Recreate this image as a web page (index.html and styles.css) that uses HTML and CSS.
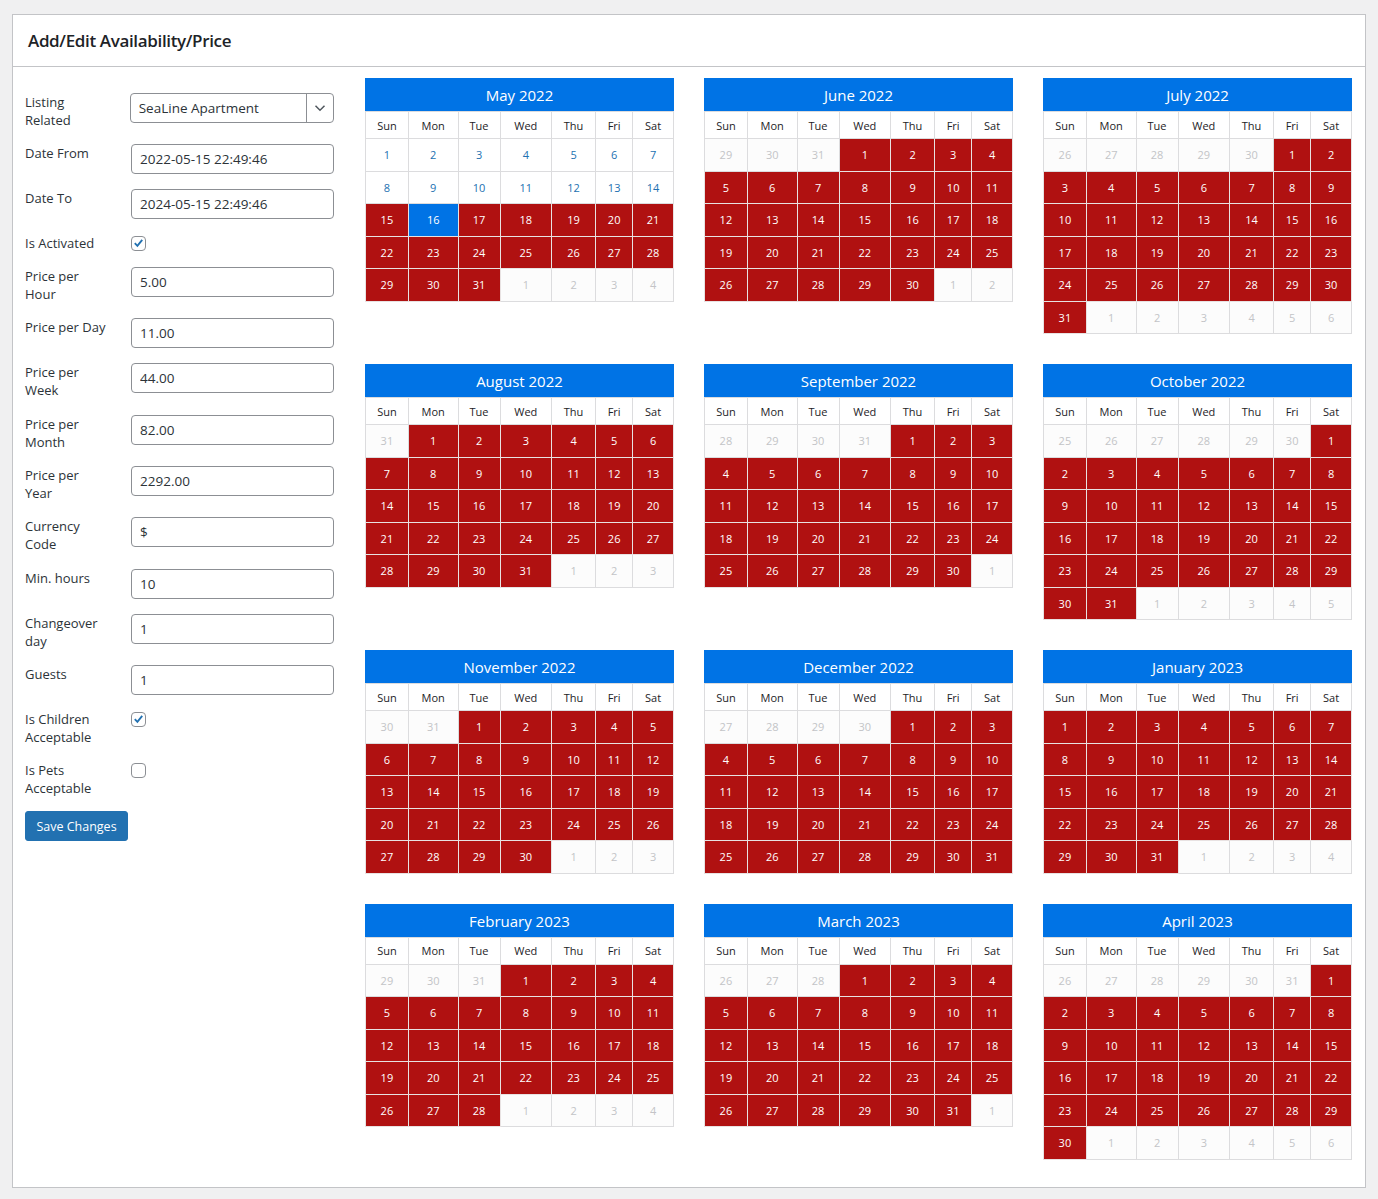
FILE: index.html
```html
<!DOCTYPE html>
<html lang="en">
<head>
<meta charset="utf-8">
<title>Add/Edit Availability/Price</title>
<link rel="stylesheet" href="styles.css">
</head>
<body>
<div class="panel">
  <div class="panel-head"><h2>Add/Edit Availability/Price</h2></div>
  <div class="panel-body">
    <form class="form">
      <div class="row"><label>Listing Related</label>
        <div class="select"><span class="select-text">SeaLine Apartment</span><span class="select-arrow"><svg width="12" height="8" viewBox="0 0 12 8"><path d="M1.5 1.8 6 6.2 10.5 1.8" fill="none" stroke="#50575e" stroke-width="1.5"/></svg></span></div></div>
      <div class="row"><label>Date From</label><input class="field" type="text" value="2022-05-15 22:49:46"></div>
      <div class="row"><label>Date To</label><input class="field" type="text" value="2024-05-15 22:49:46"></div>
      <div class="row"><label>Is Activated</label><span class="check on"><svg width="14" height="14" viewBox="0 0 14 14"><path d="M3 7.2 5.8 10 11 3.6" fill="none" stroke="#2271b1" stroke-width="2"/></svg></span></div>
      <div class="row"><label>Price per Hour</label><input class="field" type="text" value="5.00"></div>
      <div class="row"><label>Price per Day</label><input class="field" type="text" value="11.00"></div>
      <div class="row"><label>Price per Week</label><input class="field" type="text" value="44.00"></div>
      <div class="row"><label>Price per Month</label><input class="field" type="text" value="82.00"></div>
      <div class="row"><label>Price per Year</label><input class="field" type="text" value="2292.00"></div>
      <div class="row"><label>Currency Code</label><input class="field" type="text" value="$"></div>
      <div class="row"><label>Min. hours</label><input class="field" type="text" value="10"></div>
      <div class="row"><label>Changeover day</label><input class="field" type="text" value="1"></div>
      <div class="row"><label>Guests</label><input class="field" type="text" value="1"></div>
      <div class="row"><label>Is Children Acceptable</label><span class="check on"><svg width="14" height="14" viewBox="0 0 14 14"><path d="M3 7.2 5.8 10 11 3.6" fill="none" stroke="#2271b1" stroke-width="2"/></svg></span></div>
      <div class="row"><label>Is Pets Acceptable</label><span class="check"></span></div>
      <div class="actions"><button type="button" class="btn">Save Changes</button></div>
    </form>

    <div class="cals">
      <div class="cal">
        <div class="cal-title">May 2022</div>
        <table>
          <thead><tr><th class="w-sun">Sun</th><th class="w-mon">Mon</th><th class="w-tue">Tue</th><th class="w-wed">Wed</th><th class="w-thu">Thu</th><th class="w-fri">Fri</th><th class="w-sat">Sat</th></tr></thead>
          <tbody>
            <tr><td class="a">1</td><td class="a">2</td><td class="a">3</td><td class="a">4</td><td class="a">5</td><td class="a">6</td><td class="a">7</td></tr>
            <tr><td class="a">8</td><td class="a">9</td><td class="a">10</td><td class="a">11</td><td class="a">12</td><td class="a">13</td><td class="a">14</td></tr>
            <tr><td>15</td><td class="s">16</td><td>17</td><td>18</td><td>19</td><td>20</td><td>21</td></tr>
            <tr><td>22</td><td>23</td><td>24</td><td>25</td><td>26</td><td>27</td><td>28</td></tr>
            <tr><td>29</td><td>30</td><td>31</td><td class="o">1</td><td class="o">2</td><td class="o">3</td><td class="o">4</td></tr>
          </tbody>
        </table>
      </div>

      <div class="cal">
        <div class="cal-title">June 2022</div>
        <table>
          <thead><tr><th class="w-sun">Sun</th><th class="w-mon">Mon</th><th class="w-tue">Tue</th><th class="w-wed">Wed</th><th class="w-thu">Thu</th><th class="w-fri">Fri</th><th class="w-sat">Sat</th></tr></thead>
          <tbody>
            <tr><td class="o">29</td><td class="o">30</td><td class="o">31</td><td>1</td><td>2</td><td>3</td><td>4</td></tr>
            <tr><td>5</td><td>6</td><td>7</td><td>8</td><td>9</td><td>10</td><td>11</td></tr>
            <tr><td>12</td><td>13</td><td>14</td><td>15</td><td>16</td><td>17</td><td>18</td></tr>
            <tr><td>19</td><td>20</td><td>21</td><td>22</td><td>23</td><td>24</td><td>25</td></tr>
            <tr><td>26</td><td>27</td><td>28</td><td>29</td><td>30</td><td class="o">1</td><td class="o">2</td></tr>
          </tbody>
        </table>
      </div>

      <div class="cal">
        <div class="cal-title">July 2022</div>
        <table>
          <thead><tr><th class="w-sun">Sun</th><th class="w-mon">Mon</th><th class="w-tue">Tue</th><th class="w-wed">Wed</th><th class="w-thu">Thu</th><th class="w-fri">Fri</th><th class="w-sat">Sat</th></tr></thead>
          <tbody>
            <tr><td class="o">26</td><td class="o">27</td><td class="o">28</td><td class="o">29</td><td class="o">30</td><td>1</td><td>2</td></tr>
            <tr><td>3</td><td>4</td><td>5</td><td>6</td><td>7</td><td>8</td><td>9</td></tr>
            <tr><td>10</td><td>11</td><td>12</td><td>13</td><td>14</td><td>15</td><td>16</td></tr>
            <tr><td>17</td><td>18</td><td>19</td><td>20</td><td>21</td><td>22</td><td>23</td></tr>
            <tr><td>24</td><td>25</td><td>26</td><td>27</td><td>28</td><td>29</td><td>30</td></tr>
            <tr><td>31</td><td class="o">1</td><td class="o">2</td><td class="o">3</td><td class="o">4</td><td class="o">5</td><td class="o">6</td></tr>
          </tbody>
        </table>
      </div>

      <div class="cal">
        <div class="cal-title">August 2022</div>
        <table>
          <thead><tr><th class="w-sun">Sun</th><th class="w-mon">Mon</th><th class="w-tue">Tue</th><th class="w-wed">Wed</th><th class="w-thu">Thu</th><th class="w-fri">Fri</th><th class="w-sat">Sat</th></tr></thead>
          <tbody>
            <tr><td class="o">31</td><td>1</td><td>2</td><td>3</td><td>4</td><td>5</td><td>6</td></tr>
            <tr><td>7</td><td>8</td><td>9</td><td>10</td><td>11</td><td>12</td><td>13</td></tr>
            <tr><td>14</td><td>15</td><td>16</td><td>17</td><td>18</td><td>19</td><td>20</td></tr>
            <tr><td>21</td><td>22</td><td>23</td><td>24</td><td>25</td><td>26</td><td>27</td></tr>
            <tr><td>28</td><td>29</td><td>30</td><td>31</td><td class="o">1</td><td class="o">2</td><td class="o">3</td></tr>
          </tbody>
        </table>
      </div>

      <div class="cal">
        <div class="cal-title">September 2022</div>
        <table>
          <thead><tr><th class="w-sun">Sun</th><th class="w-mon">Mon</th><th class="w-tue">Tue</th><th class="w-wed">Wed</th><th class="w-thu">Thu</th><th class="w-fri">Fri</th><th class="w-sat">Sat</th></tr></thead>
          <tbody>
            <tr><td class="o">28</td><td class="o">29</td><td class="o">30</td><td class="o">31</td><td>1</td><td>2</td><td>3</td></tr>
            <tr><td>4</td><td>5</td><td>6</td><td>7</td><td>8</td><td>9</td><td>10</td></tr>
            <tr><td>11</td><td>12</td><td>13</td><td>14</td><td>15</td><td>16</td><td>17</td></tr>
            <tr><td>18</td><td>19</td><td>20</td><td>21</td><td>22</td><td>23</td><td>24</td></tr>
            <tr><td>25</td><td>26</td><td>27</td><td>28</td><td>29</td><td>30</td><td class="o">1</td></tr>
          </tbody>
        </table>
      </div>

      <div class="cal">
        <div class="cal-title">October 2022</div>
        <table>
          <thead><tr><th class="w-sun">Sun</th><th class="w-mon">Mon</th><th class="w-tue">Tue</th><th class="w-wed">Wed</th><th class="w-thu">Thu</th><th class="w-fri">Fri</th><th class="w-sat">Sat</th></tr></thead>
          <tbody>
            <tr><td class="o">25</td><td class="o">26</td><td class="o">27</td><td class="o">28</td><td class="o">29</td><td class="o">30</td><td>1</td></tr>
            <tr><td>2</td><td>3</td><td>4</td><td>5</td><td>6</td><td>7</td><td>8</td></tr>
            <tr><td>9</td><td>10</td><td>11</td><td>12</td><td>13</td><td>14</td><td>15</td></tr>
            <tr><td>16</td><td>17</td><td>18</td><td>19</td><td>20</td><td>21</td><td>22</td></tr>
            <tr><td>23</td><td>24</td><td>25</td><td>26</td><td>27</td><td>28</td><td>29</td></tr>
            <tr><td>30</td><td>31</td><td class="o">1</td><td class="o">2</td><td class="o">3</td><td class="o">4</td><td class="o">5</td></tr>
          </tbody>
        </table>
      </div>

      <div class="cal">
        <div class="cal-title">November 2022</div>
        <table>
          <thead><tr><th class="w-sun">Sun</th><th class="w-mon">Mon</th><th class="w-tue">Tue</th><th class="w-wed">Wed</th><th class="w-thu">Thu</th><th class="w-fri">Fri</th><th class="w-sat">Sat</th></tr></thead>
          <tbody>
            <tr><td class="o">30</td><td class="o">31</td><td>1</td><td>2</td><td>3</td><td>4</td><td>5</td></tr>
            <tr><td>6</td><td>7</td><td>8</td><td>9</td><td>10</td><td>11</td><td>12</td></tr>
            <tr><td>13</td><td>14</td><td>15</td><td>16</td><td>17</td><td>18</td><td>19</td></tr>
            <tr><td>20</td><td>21</td><td>22</td><td>23</td><td>24</td><td>25</td><td>26</td></tr>
            <tr><td>27</td><td>28</td><td>29</td><td>30</td><td class="o">1</td><td class="o">2</td><td class="o">3</td></tr>
          </tbody>
        </table>
      </div>

      <div class="cal">
        <div class="cal-title">December 2022</div>
        <table>
          <thead><tr><th class="w-sun">Sun</th><th class="w-mon">Mon</th><th class="w-tue">Tue</th><th class="w-wed">Wed</th><th class="w-thu">Thu</th><th class="w-fri">Fri</th><th class="w-sat">Sat</th></tr></thead>
          <tbody>
            <tr><td class="o">27</td><td class="o">28</td><td class="o">29</td><td class="o">30</td><td>1</td><td>2</td><td>3</td></tr>
            <tr><td>4</td><td>5</td><td>6</td><td>7</td><td>8</td><td>9</td><td>10</td></tr>
            <tr><td>11</td><td>12</td><td>13</td><td>14</td><td>15</td><td>16</td><td>17</td></tr>
            <tr><td>18</td><td>19</td><td>20</td><td>21</td><td>22</td><td>23</td><td>24</td></tr>
            <tr><td>25</td><td>26</td><td>27</td><td>28</td><td>29</td><td>30</td><td>31</td></tr>
          </tbody>
        </table>
      </div>

      <div class="cal">
        <div class="cal-title">January 2023</div>
        <table>
          <thead><tr><th class="w-sun">Sun</th><th class="w-mon">Mon</th><th class="w-tue">Tue</th><th class="w-wed">Wed</th><th class="w-thu">Thu</th><th class="w-fri">Fri</th><th class="w-sat">Sat</th></tr></thead>
          <tbody>
            <tr><td>1</td><td>2</td><td>3</td><td>4</td><td>5</td><td>6</td><td>7</td></tr>
            <tr><td>8</td><td>9</td><td>10</td><td>11</td><td>12</td><td>13</td><td>14</td></tr>
            <tr><td>15</td><td>16</td><td>17</td><td>18</td><td>19</td><td>20</td><td>21</td></tr>
            <tr><td>22</td><td>23</td><td>24</td><td>25</td><td>26</td><td>27</td><td>28</td></tr>
            <tr><td>29</td><td>30</td><td>31</td><td class="o">1</td><td class="o">2</td><td class="o">3</td><td class="o">4</td></tr>
          </tbody>
        </table>
      </div>

      <div class="cal">
        <div class="cal-title">February 2023</div>
        <table>
          <thead><tr><th class="w-sun">Sun</th><th class="w-mon">Mon</th><th class="w-tue">Tue</th><th class="w-wed">Wed</th><th class="w-thu">Thu</th><th class="w-fri">Fri</th><th class="w-sat">Sat</th></tr></thead>
          <tbody>
            <tr><td class="o">29</td><td class="o">30</td><td class="o">31</td><td>1</td><td>2</td><td>3</td><td>4</td></tr>
            <tr><td>5</td><td>6</td><td>7</td><td>8</td><td>9</td><td>10</td><td>11</td></tr>
            <tr><td>12</td><td>13</td><td>14</td><td>15</td><td>16</td><td>17</td><td>18</td></tr>
            <tr><td>19</td><td>20</td><td>21</td><td>22</td><td>23</td><td>24</td><td>25</td></tr>
            <tr><td>26</td><td>27</td><td>28</td><td class="o">1</td><td class="o">2</td><td class="o">3</td><td class="o">4</td></tr>
          </tbody>
        </table>
      </div>

      <div class="cal">
        <div class="cal-title">March 2023</div>
        <table>
          <thead><tr><th class="w-sun">Sun</th><th class="w-mon">Mon</th><th class="w-tue">Tue</th><th class="w-wed">Wed</th><th class="w-thu">Thu</th><th class="w-fri">Fri</th><th class="w-sat">Sat</th></tr></thead>
          <tbody>
            <tr><td class="o">26</td><td class="o">27</td><td class="o">28</td><td>1</td><td>2</td><td>3</td><td>4</td></tr>
            <tr><td>5</td><td>6</td><td>7</td><td>8</td><td>9</td><td>10</td><td>11</td></tr>
            <tr><td>12</td><td>13</td><td>14</td><td>15</td><td>16</td><td>17</td><td>18</td></tr>
            <tr><td>19</td><td>20</td><td>21</td><td>22</td><td>23</td><td>24</td><td>25</td></tr>
            <tr><td>26</td><td>27</td><td>28</td><td>29</td><td>30</td><td>31</td><td class="o">1</td></tr>
          </tbody>
        </table>
      </div>

      <div class="cal">
        <div class="cal-title">April 2023</div>
        <table>
          <thead><tr><th class="w-sun">Sun</th><th class="w-mon">Mon</th><th class="w-tue">Tue</th><th class="w-wed">Wed</th><th class="w-thu">Thu</th><th class="w-fri">Fri</th><th class="w-sat">Sat</th></tr></thead>
          <tbody>
            <tr><td class="o">26</td><td class="o">27</td><td class="o">28</td><td class="o">29</td><td class="o">30</td><td class="o">31</td><td>1</td></tr>
            <tr><td>2</td><td>3</td><td>4</td><td>5</td><td>6</td><td>7</td><td>8</td></tr>
            <tr><td>9</td><td>10</td><td>11</td><td>12</td><td>13</td><td>14</td><td>15</td></tr>
            <tr><td>16</td><td>17</td><td>18</td><td>19</td><td>20</td><td>21</td><td>22</td></tr>
            <tr><td>23</td><td>24</td><td>25</td><td>26</td><td>27</td><td>28</td><td>29</td></tr>
            <tr><td>30</td><td class="o">1</td><td class="o">2</td><td class="o">3</td><td class="o">4</td><td class="o">5</td><td class="o">6</td></tr>
          </tbody>
        </table>
      </div>
    </div>
  </div>
</div>
</body>
</html>
```

FILE: styles.css
```css
html, body {
  margin: 0;
  padding: 0;
  background: #f0f0f1;
}
body {
  padding: 14px 12px 12px;
  font-family: "Open Sans", "Noto Sans", "Liberation Sans", sans-serif;
  color: #1d2327;
}
.panel {
  background: #fff;
  border: 1px solid #c3c4c7;
}
.panel-head {
  height: 51px;
  border-bottom: 1px solid #c3c4c7;
  display: flex;
  align-items: center;
  padding-left: 15px;
}
.panel-head h2 {
  margin: 0;
  font-size: 17px;
  font-weight: 600;
  letter-spacing: -0.35px;
  color: #1d2327;
}
.panel-body {
  display: flex;
  align-items: flex-start;
  gap: 31px;
  padding: 11px 13px 27px 12px;
}
.form {
  width: 309px;
  flex: none;
  margin-top: 14.5px;
  display: flex;
  flex-direction: column;
  gap: 15px;
}
.row {
  display: flex;
  align-items: flex-start;
}
.row label {
  width: 84px;
  margin-right: 22px;
  font-size: 13px;
  line-height: 18.15px;
  color: #2c3338;
}
.field {
  box-sizing: border-box;
  width: 203px;
  height: 30px;
  margin: 0;
  padding: 0 8px;
  border: 1px solid #8c8f94;
  border-radius: 4px;
  font-family: inherit;
  font-size: 13.5px;
  color: #2c3338;
  background: #fff;
}
.select {
  box-sizing: border-box;
  width: 205px;
  height: 30px;
  margin-left: -1px;
  border: 1px solid #8c8f94;
  border-radius: 4px;
  display: flex;
  align-items: center;
}
.select-text {
  flex: 1;
  padding-left: 8px;
  font-size: 13.5px;
  color: #2c3338;
}
.select-arrow {
  width: 26px;
  height: 100%;
  border-left: 1px solid #8c8f94;
  display: flex;
  align-items: center;
  justify-content: center;
}
.check {
  box-sizing: border-box;
  width: 15px;
  height: 15px;
  margin-top: 2px;
  border: 1px solid #8c8f94;
  border-radius: 4px;
  display: flex;
  align-items: center;
  justify-content: center;
  background: #fff;
}
.actions {
  margin-top: -1px;
}
.btn {
  height: 30px;
  width: 103px;
  padding: 0;
  border: 1px solid #2271b1;
  border-radius: 3px;
  background: #2271b1;
  color: #fff;
  font-family: inherit;
  font-size: 12.5px;
  cursor: pointer;
}
.cals {
  flex: 1;
  display: grid;
  grid-template-columns: repeat(3, 1fr);
  column-gap: 30px;
  row-gap: 30px;
  align-items: start;
}
.cal-title {
  height: 33px;
  line-height: 34px;
  background: #0073e5;
  color: #fff;
  text-align: center;
  font-size: 15px;
}
.cal table {
  width: 100%;
  table-layout: fixed;
  border-collapse: collapse;
  font-size: 11px;
}
.cal th, .cal td {
  border: 1px solid #dcdcde;
  padding: 0;
  text-align: center;
}
.cal th {
  height: 26px;
  font-weight: 400;
  color: #1d2327;
  background: #fff;
}
.cal td {
  height: 31.5px;
  background: #b01111;
  color: #fff;
  border-color: #e8e2e2;
}
.cal td.a {
  background: #fff;
  color: #2271b1;
  border-color: #dcdcde;
}
.cal td.s {
  background: #0073e5;
  color: #fff;
}
.cal td.o {
  background: #fcfcfc;
  color: #c3c4c7;
  border-color: #dcdcde;
}
.w-sun { width: 13.9%; }
.w-mon { width: 16.2%; }
.w-tue { width: 13.6%; }
.w-wed { width: 16.8%; }
.w-thu { width: 14.3%; }
.w-fri { width: 12%; }
.w-sat { width: 13.2%; }
```
